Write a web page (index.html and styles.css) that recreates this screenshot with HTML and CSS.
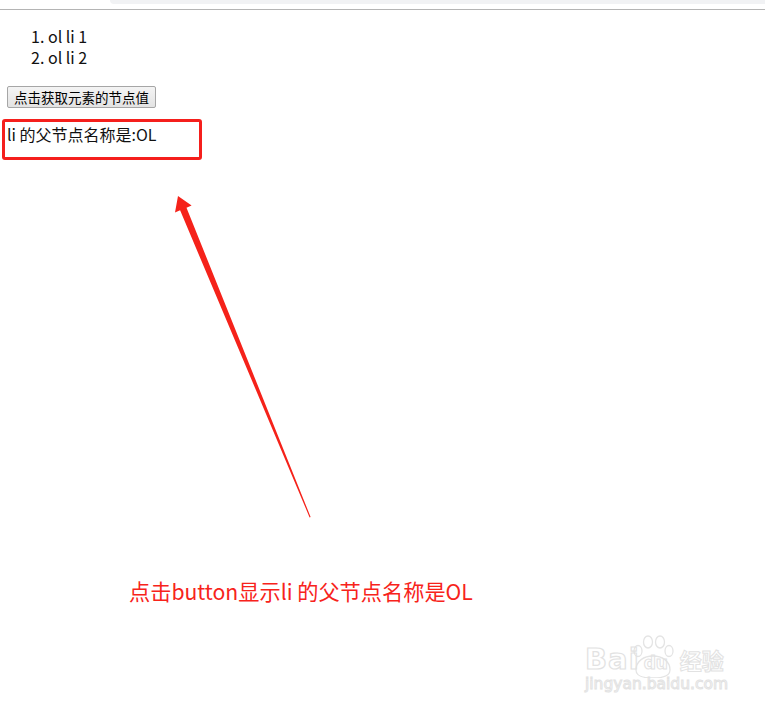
FILE: index.html
```html
<!DOCTYPE html>
<html lang="zh">
<head>
<meta charset="utf-8">
<title>parentNode</title>
<link rel="stylesheet" href="styles.css">
</head>
<body>
<div class="chrome"><div class="tabstrip"></div></div>
<div class="page">
  <ol class="list">
    <li>ol li 1</li>
    <li>ol li 2</li>
  </ol>
  <button class="btn" type="button">点击获取元素的节点值</button>
  <p class="result">li 的父节点名称是:OL</p>
</div>

<div class="mark-box"></div>
<svg class="arrow" width="765" height="712" viewBox="0 0 765 712" aria-hidden="true">
  <polygon points="178,196 191.6,205.6 186.5,207.7 310.6,517 309.6,517.4 180.1,210.3 175,212.4" fill="#f5221a"/>
</svg>
<div class="note">点击button显示li 的父节点名称是OL</div>

<div class="watermark">
  <svg class="paw" width="60" height="50" viewBox="0 0 60 50" aria-hidden="true">
    <ellipse cx="8" cy="23" rx="4" ry="5.5" fill="none" stroke="#e4e4e4" stroke-width="1.3"/>
    <ellipse cx="18" cy="14" rx="4.5" ry="6" fill="none" stroke="#e4e4e4" stroke-width="1.3"/>
    <ellipse cx="30" cy="14" rx="4.5" ry="6" fill="none" stroke="#e4e4e4" stroke-width="1.3"/>
    <ellipse cx="39" cy="23" rx="4" ry="5.5" fill="none" stroke="#e4e4e4" stroke-width="1.3"/>
    <path d="M6 42 C6 33 14 28 23 28 C32 28 40 33 40 42 C40 48 34 50 23 50 C12 50 6 48 6 42 Z" fill="none" stroke="#e4e4e4" stroke-width="1.3"/>
  </svg>
  <div class="wm-row">
    <span class="wm-bai">Bai</span><span class="wm-du">du</span><span class="wm-jy">经验</span>
  </div>
  <div class="wm-url">jingyan.baidu.com</div>
</div>
</body>
</html>
```
FILE: styles.css
```css
html, body {
  margin: 0;
  padding: 0;
  background: #ffffff;
}

body {
  font-family: "Noto Sans CJK SC", "Noto Sans", sans-serif;
  font-size: 16px;
  color: #111;
  position: relative;
  width: 765px;
  height: 712px;
  overflow: hidden;
}

.chrome {
  height: 9px;
  border-bottom: 1px solid #b4b4b4;
  position: relative;
  background: #fff;
}

.tabstrip {
  position: absolute;
  left: 110px;
  right: 0;
  top: 0;
  height: 4px;
  background: #f1f2f4;
  border-bottom-left-radius: 8px;
}

.page {
  padding: 16px 8px 0 8px;
}

.list {
  margin: 0 0 16px 0;
  padding-left: 40px;
  line-height: 21px;
}

.btn {
  font-family: "Noto Sans CJK SC", sans-serif;
  font-size: 13.5px;
  line-height: 16px;
  height: 22px;
  padding: 1px 6px;
  margin-left: -1px;
  color: #000;
  background: linear-gradient(#f4f4f4, #e3e3e3);
  border: 1px solid #a6a6a6;
  border-radius: 2px;
}

.result {
  margin: 16px 0 0 -1px;
  line-height: 21px;
}

.mark-box {
  position: absolute;
  left: 2px;
  top: 119px;
  width: 194px;
  height: 35px;
  border: 3px solid #f51f1c;
  border-radius: 3px;
}

.arrow {
  position: absolute;
  left: 0;
  top: 0;
}

.note {
  position: absolute;
  left: 129px;
  top: 577px;
  font-size: 21.2px;
  line-height: 27px;
  color: #f7231b;
  white-space: nowrap;
}

.watermark {
  position: absolute;
  left: 583px;
  top: 622px;
  width: 145px;
  height: 75px;
}

.paw {
  position: absolute;
  left: 47px;
  top: 6px;
}

.wm-row {
  position: absolute;
  left: 2px;
  top: 20px;
  display: flex;
  align-items: baseline;
  white-space: nowrap;
}

.wm-bai {
  font-family: "DejaVu Sans", sans-serif;
  font-size: 29px;
  font-weight: bold;
  color: transparent;
  -webkit-text-stroke: 1.2px #e2e2e2;
  letter-spacing: 1px;
}

.wm-du {
  font-family: "DejaVu Sans", sans-serif;
  font-size: 17px;
  font-weight: bold;
  color: transparent;
  -webkit-text-stroke: 1px #e2e2e2;
  margin-left: 4px;
  width: 34px;
}

.wm-jy {
  font-family: "Noto Sans CJK SC", sans-serif;
  font-size: 22px;
  font-weight: bold;
  color: transparent;
  -webkit-text-stroke: 1px #e2e2e2;
  margin-left: 2px;
}

.wm-url {
  position: absolute;
  left: 2px;
  top: 53px;
  font-family: "DejaVu Sans", sans-serif;
  font-size: 15.5px;
  color: transparent;
  -webkit-text-stroke: 1px #e2e2e2;
  white-space: nowrap;
}
```
